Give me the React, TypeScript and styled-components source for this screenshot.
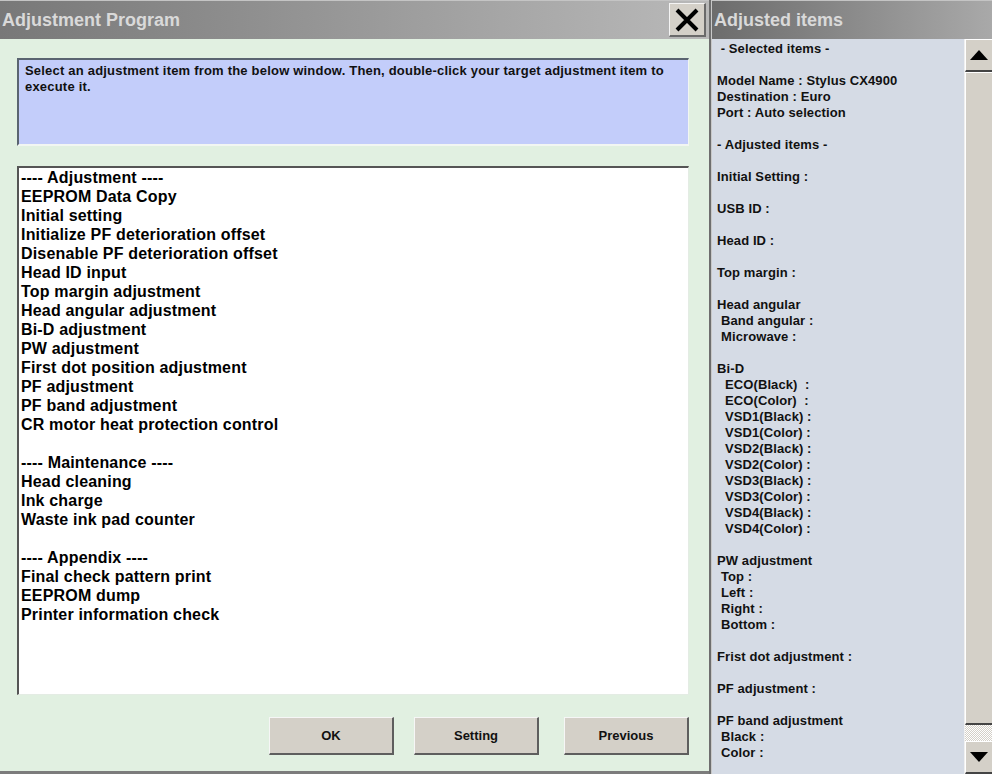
import React from "react";
import styled, { createGlobalStyle } from "styled-components";

const Global = createGlobalStyle`
  html, body { margin: 0; padding: 0; background: #d5dbe5; }
  body { font-family: "Liberation Sans", Arial, sans-serif; }
  * { box-sizing: border-box; }
`;

const Screen = styled.div`
  width: 992px;
  height: 774px;
  display: flex;
  overflow: hidden;
`;

const LeftPanel = styled.div`
  width: 709px;
  display: flex;
  flex-direction: column;
  background: #e1f0e1;
  border-bottom: 3px solid #7c7c7c;
`;

const Divider = styled.div`
  width: 3px;
  background: #6e6e6e;
  border-right: 1px solid #c8c8c8;
`;

const TitleBar = styled.div<{ $from: string; $to: string }>`
  height: 39px;
  flex: none;
  display: flex;
  align-items: center;
  justify-content: space-between;
  padding: 0 3px 0 2px;
  background: linear-gradient(to right, ${(p) => p.$from}, ${(p) => p.$to});
  border-top: 1px solid #c4c4c4;
`;

const TitleText = styled.div`
  font-family: "Liberation Sans", Arial, sans-serif;
  font-weight: bold;
  font-size: 18px;
  color: #d9d9d9;
`;

const CloseButton = styled.div`
  width: 37px;
  height: 34px;
  background: #d4d0c8;
  border-top: 1px solid #f4f4f4;
  border-left: 1px solid #f4f4f4;
  border-right: 2px solid #6a6a6a;
  border-bottom: 2px solid #6a6a6a;
  display: flex;
  align-items: center;
  justify-content: center;
`;

const Body = styled.div`
  flex: 1;
  display: flex;
  flex-direction: column;
  padding: 19px 20px 0 17px;
`;

const InfoBox = styled.div`
  height: 88px;
  background: #c3cdfa;
  border-top: 2px solid #5a6470;
  border-left: 2px solid #5a6470;
  border-right: 1px solid #f2f6f2;
  border-bottom: 2px solid #f2f6f2;
  padding: 3px 6px 0 6px;
  font-size: 13px;
  font-weight: bold;
  letter-spacing: 0.2px;
  line-height: 16px;
  color: #111;
`;

const ListBox = styled.div`
  margin-top: 20px;
  height: 529px;
  background: #ffffff;
  border-top: 2px solid #555;
  border-left: 2px solid #555;
  border-right: 1px solid #e4ece4;
  border-bottom: 1px solid #e4ece4;
  padding: 0 2px;
  overflow: hidden;
`;

const ListItem = styled.div`
  height: 19px;
  line-height: 19px;
  font-size: 16px;
  font-weight: bold;
  letter-spacing: 0.18px;
  color: #000;
  white-space: pre;
`;

const ButtonRow = styled.div`
  margin-top: 22px;
  display: flex;
  justify-content: flex-end;
`;

const Button = styled.div<{ $gap: number }>`
  width: 125px;
  height: 38px;
  margin-left: ${(p) => p.$gap}px;
  background: #d4d0c8;
  border-top: 1px solid #f6f6f6;
  border-left: 1px solid #f6f6f6;
  border-right: 2px solid #5e5e5e;
  border-bottom: 2px solid #5e5e5e;
  display: flex;
  align-items: center;
  justify-content: center;
  font-size: 13px;
  font-weight: bold;
  color: #111;
`;

const RightPanel = styled.div`
  flex: 1;
  display: flex;
  flex-direction: column;
  background: #d5dbe5;
`;

const RightContent = styled.div`
  flex: 1;
  display: flex;
  min-height: 0;
`;

const InfoColumn = styled.div`
  flex: 1;
  padding: 2px 0 0 5px;
  overflow: hidden;
`;

const InfoLine = styled.div<{ $indent: number }>`
  height: 16px;
  line-height: 16px;
  font-size: 13px;
  font-weight: bold;
  letter-spacing: 0.1px;
  color: #111;
  white-space: pre;
  padding-left: ${(p) => p.$indent * 4}px;
`;

const ScrollBar = styled.div`
  width: 28px;
  display: flex;
  flex-direction: column;
  background: #d4d0c8;
  border-left: 1px solid #f0f0f0;
`;

const ScrollButton = styled.div`
  height: 33px;
  flex: none;
  background: #d4d0c8;
  border-top: 1px solid #ffffff;
  border-left: 1px solid #ffffff;
  border-bottom: 2px solid #444;
  display: flex;
  align-items: center;
  justify-content: center;
`;

const Thumb = styled.div`
  flex: 1;
  background: #d4d0c8;
  border-top: 1px solid #ffffff;
  border-left: 1px solid #ffffff;
  border-bottom: 2px solid #444;
`;

const Dither = styled.div`
  height: 16px;
  flex: none;
  background-color: #ffffff;
  background-image: repeating-conic-gradient(#d4d0c8 0% 25%, #ffffff 0% 50%);
  background-size: 2px 2px;
`;

const Arrow = ({ up }: { up: boolean }) => (
  <svg width="18" height="10" viewBox="0 0 18 10">
    <polygon points={up ? "9,0 18,10 0,10" : "0,0 18,0 9,10"} fill="#000" />
  </svg>
);

const listItems = [
  "---- Adjustment ----",
  "EEPROM Data Copy",
  "Initial setting",
  "Initialize PF deterioration offset",
  "Disenable PF deterioration offset",
  "Head ID input",
  "Top margin adjustment",
  "Head angular adjustment",
  "Bi-D adjustment",
  "PW adjustment",
  "First dot position adjustment",
  "PF adjustment",
  "PF band adjustment",
  "CR motor heat protection control",
  "",
  "---- Maintenance ----",
  "Head cleaning",
  "Ink charge",
  "Waste ink pad counter",
  "",
  "---- Appendix ----",
  "Final check pattern print",
  "EEPROM dump",
  "Printer information check",
];

const infoLines: [number, string][] = [
  [0, " - Selected items -"],
  [0, ""],
  [0, "Model Name : Stylus CX4900"],
  [0, "Destination : Euro"],
  [0, "Port : Auto selection"],
  [0, ""],
  [0, "- Adjusted items -"],
  [0, ""],
  [0, "Initial Setting :"],
  [0, ""],
  [0, "USB ID :"],
  [0, ""],
  [0, "Head ID :"],
  [0, ""],
  [0, "Top margin :"],
  [0, ""],
  [0, "Head angular"],
  [1, "Band angular :"],
  [1, "Microwave :"],
  [0, ""],
  [0, "Bi-D"],
  [2, "ECO(Black)  :"],
  [2, "ECO(Color)  :"],
  [2, "VSD1(Black) :"],
  [2, "VSD1(Color) :"],
  [2, "VSD2(Black) :"],
  [2, "VSD2(Color) :"],
  [2, "VSD3(Black) :"],
  [2, "VSD3(Color) :"],
  [2, "VSD4(Black) :"],
  [2, "VSD4(Color) :"],
  [0, ""],
  [0, "PW adjustment"],
  [1, "Top :"],
  [1, "Left :"],
  [1, "Right :"],
  [1, "Bottom :"],
  [0, ""],
  [0, "Frist dot adjustment :"],
  [0, ""],
  [0, "PF adjustment :"],
  [0, ""],
  [0, "PF band adjustment"],
  [1, "Black :"],
  [1, "Color :"],
];

export default function App() {
  return (
    <>
      <Global />
      <Screen>
        <LeftPanel>
          <TitleBar $from="#787878" $to="#b9b9b9">
            <TitleText>Adjustment Program</TitleText>
            <CloseButton>
              <svg width="24" height="24" viewBox="0 0 24 24">
                <path d="M2 2 L22 22 M22 2 L2 22" stroke="#000" strokeWidth="4" />
              </svg>
            </CloseButton>
          </TitleBar>
          <Body>
            <InfoBox>
              Select an adjustment item from the below window. Then, double-click your target adjustment item to execute it.
            </InfoBox>
            <ListBox>
              {listItems.map((t, i) => (
                <ListItem key={i}>{t || " "}</ListItem>
              ))}
            </ListBox>
            <ButtonRow>
              <Button $gap={0}>OK</Button>
              <Button $gap={20}>Setting</Button>
              <Button $gap={25}>Previous</Button>
            </ButtonRow>
          </Body>
        </LeftPanel>
        <Divider />
        <RightPanel>
          <TitleBar $from="#6c6c6c" $to="#a9a9a9">
            <TitleText>Adjusted items</TitleText>
          </TitleBar>
          <RightContent>
            <InfoColumn>
              {infoLines.map(([ind, t], i) => (
                <InfoLine key={i} $indent={ind}>{t || " "}</InfoLine>
              ))}
            </InfoColumn>
            <ScrollBar>
              <ScrollButton>
                <Arrow up />
              </ScrollButton>
              <Thumb />
              <Dither />
              <ScrollButton>
                <Arrow up={false} />
              </ScrollButton>
            </ScrollBar>
          </RightContent>
        </RightPanel>
      </Screen>
    </>
  );
}
